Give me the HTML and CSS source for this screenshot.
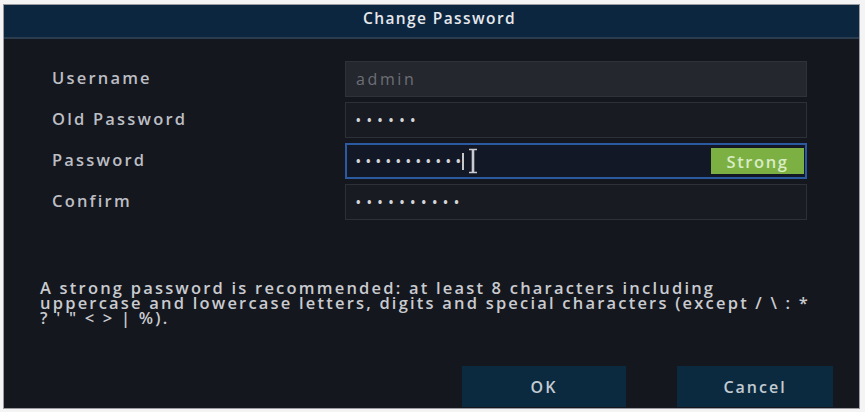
FILE: index.html
```html
<!DOCTYPE html>
<html lang="en">
<head>
<meta charset="utf-8">
<title>Change Password</title>
<link rel="stylesheet" href="styles.css">
</head>
<body>
<div class="dialog">
  <div class="header">Change Password</div>
  <div class="body">
    <div class="form">
      <div class="label">Username</div>
      <div class="field disabled"><span class="value">admin</span></div>
      <div class="label">Old Password</div>
      <div class="field"><span class="dots">••••••</span></div>
      <div class="label">Password</div>
      <div class="field focused">
        <span class="dots tight">•••••••••••</span><span class="caret"></span>
        <svg class="ibeam" width="10" height="26" viewBox="0 0 10 26"><path d="M1 1.5h3.5v23H1M9 1.5H5.5v23H9" fill="none" stroke="#c9cbd0" stroke-width="1.6"/></svg>
        <span class="strength">Strong</span>
      </div>
      <div class="label">Confirm</div>
      <div class="field"><span class="dots">••••••••••</span></div>
    </div>
    <p class="hint">A strong password is recommended: at least 8 characters including<br>uppercase and lowercase letters, digits and special characters (except / \ : *<br>? ' " &lt; &gt; | %).</p>
    <div class="actions">
      <button class="btn ok">OK</button>
      <button class="btn cancel">Cancel</button>
    </div>
  </div>
</div>
</body>
</html>
```
FILE: styles.css
```css
html, body {
  margin: 0;
  padding: 0;
  background: #f4f4f4;
}
body {
  width: 865px;
  height: 412px;
  padding: 5px 0 0 4px;
  box-sizing: border-box;
  font-family: "Open Sans", "Noto Sans", sans-serif;
}
.dialog {
  width: 855px;
  height: 403px;
  background: #15171e;
  display: flex;
  flex-direction: column;
  box-shadow: 0 0 0 1px #9a9ca2;
}
.header {
  height: 32px;
  flex: none;
  background: #0c2640;
  border-bottom: 2px solid #2b3c4f;
  color: #e6e8ec;
  font-size: 15.5px;
  font-weight: 600;
  letter-spacing: 1.4px;
  text-align: center;
  line-height: 26px;
  padding-left: 16px;
}
.body {
  flex: 1;
  display: flex;
  flex-direction: column;
  padding: 22px 26px 0 36px;
}
.form {
  display: grid;
  grid-template-columns: 293px 462px;
  grid-auto-rows: 36px;
  row-gap: 5px;
  padding-left: 12px;
}
.label {
  color: #bcbec4;
  font-size: 16.5px;
  font-weight: 600;
  letter-spacing: 2.2px;
  line-height: 34px;
}
.field {
  position: relative;
  box-sizing: border-box;
  border: 1px solid #2d3039;
  background: #191b23;
  display: flex;
  align-items: center;
  padding-left: 10px;
  color: #d8dade;
}
.field.disabled {
  background: #25272e;
  border-color: #30323a;
}
.field.focused {
  border: 2px solid #2c5aa0;
  background: #131826;
  padding-left: 9px;
}
.value {
  color: #6c6f76;
  font-size: 16px;
  letter-spacing: 2.6px;
}
.dots {
  font-size: 12px;
  font-weight: 700;
  letter-spacing: 6.4px;
  color: #d4d6da;
}
.dots.tight {
  letter-spacing: 5.5px;
}
.caret {
  width: 2px;
  height: 17px;
  background: #c6c8cc;
  margin-left: -4px;
}
.ibeam {
  margin-left: 4px;
}
.strength {
  position: absolute;
  right: 1px;
  top: 3px;
  bottom: 3px;
  width: 93px;
  background: #7cb043;
  color: #d9ecc4;
  font-size: 16.5px;
  font-weight: 600;
  letter-spacing: 1.6px;
  display: flex;
  align-items: center;
  justify-content: center;
}
.hint {
  margin: 60px 0 0 0;
  color: #c9cbd0;
  font-size: 16.5px;
  font-weight: 600;
  line-height: 15px;
  letter-spacing: 2.2px;
  white-space: nowrap;
}
.actions {
  margin-top: auto;
  display: flex;
  justify-content: flex-end;
  gap: 51px;
  padding-bottom: 1px;
}
.btn {
  height: 41px;
  border: none;
  background: #0b2a40;
  color: #c3cbd3;
  font-family: inherit;
  font-size: 16px;
  font-weight: 600;
  letter-spacing: 2px;
  padding: 0;
}
.btn.ok { width: 164px; }
.btn.cancel { width: 156px; }
```
